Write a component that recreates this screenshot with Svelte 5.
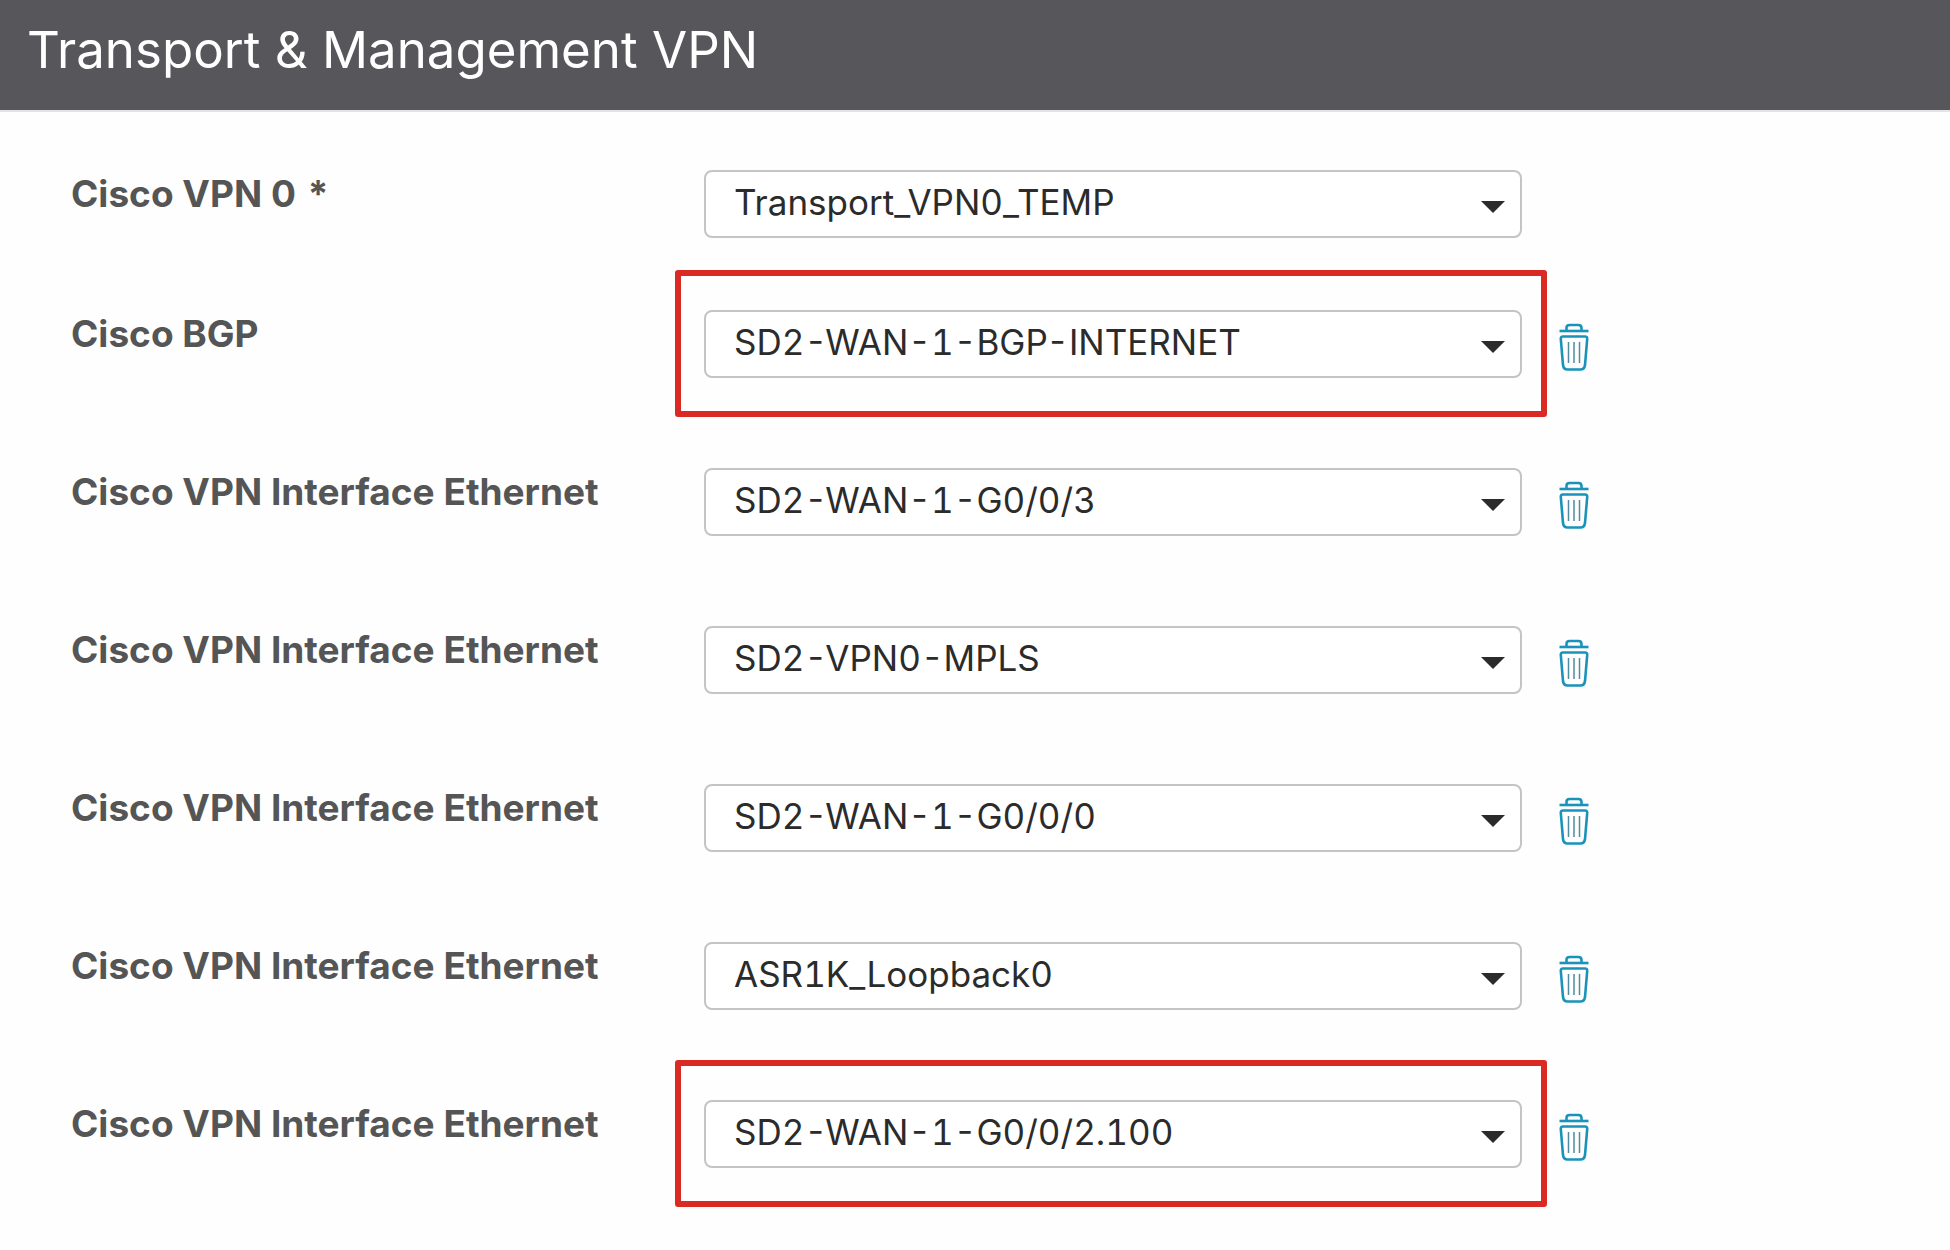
<script lang="ts">
	type Row = {
		id: string;
		label: string;
		value: string;
		required?: boolean;
		highlighted?: boolean;
	};

	let rows: Row[] = $state([
		{ id: 'vpn0', label: 'Cisco VPN 0', value: 'Transport_VPN0_TEMP', required: true },
		{ id: 'bgp', label: 'Cisco BGP', value: 'SD2-WAN-1-BGP-INTERNET', highlighted: true },
		{ id: 'eth1', label: 'Cisco VPN Interface Ethernet', value: 'SD2-WAN-1-G0/0/3' },
		{ id: 'eth2', label: 'Cisco VPN Interface Ethernet', value: 'SD2-VPN0-MPLS' },
		{ id: 'eth3', label: 'Cisco VPN Interface Ethernet', value: 'SD2-WAN-1-G0/0/0' },
		{ id: 'eth4', label: 'Cisco VPN Interface Ethernet', value: 'ASR1K_Loopback0' },
		{
			id: 'eth5',
			label: 'Cisco VPN Interface Ethernet',
			value: 'SD2-WAN-1-G0/0/2.100',
			highlighted: true
		}
	]);

	function removeRow(id: string) {
		rows = rows.filter((row) => row.id !== id);
	}
</script>

<header class="sectionHeader">
	<h1>Transport &amp; Management VPN</h1>
</header>

<form class="templates">
	{#each rows as row (row.id)}
		<div class="row" class:required={row.required}>
			<label for={row.id}>{row.label}{#if row.required}<span class="star">*</span>{/if}</label>
			<div class="field" class:highlighted={row.highlighted}>
				<select id={row.id}>
					<option>{row.value}</option>
				</select>
				<svg class="caret" viewBox="0 0 24 12" aria-hidden="true">
					<path d="M0 0h24L12 12z" fill="#2b2b2b" />
				</svg>
			</div>
			{#if !row.required}
				<button type="button" aria-label="Remove {row.label}" onclick={() => removeRow(row.id)}>
					<svg viewBox="0 0 30 48" fill="none" aria-hidden="true">
						<g stroke="#1a93ba" stroke-width="2.6">
							<path d="M0.5 8H29.5" />
							<path d="M7.5 8V5Q7.5 2 10.5 2H19.5Q22.5 2 22.5 5V8" />
							<path
								d="M4 13.5H26Q28.4 13.5 28.2 16L26 42Q25.4 46.5 21.5 46.5H8.5Q4.6 46.5 4 42L1.8 16Q1.6 13.5 4 13.5Z"
							/>
						</g>
						<path d="M9.5 19V40M15 19V40M20.5 19V40" stroke="#4f8ca0" stroke-width="1.5" />
					</svg>
				</button>
			{/if}
		</div>
	{/each}
</form>

<style>
	:global(body) {
		background: #fefefe;
		font-family: Inter, 'Liberation Sans', sans-serif;
	}

	.sectionHeader {
		padding: 20px 27px 30px;
		background: #57565b;
		border-bottom: 2px solid #e4e4e4;
	}

	h1 {
		margin: 0;
		font-size: 51px;
		font-weight: 400;
		line-height: 60px;
		color: #fff;
	}

	.templates {
		padding: 58px 396px 0 71px;
	}

	.row {
		display: grid;
		grid-template-columns: 633px minmax(0, 1fr) 32px;
		align-items: start;
		height: 158px;
	}

	.row.required {
		height: 140px;
	}

	label {
		font-size: 37px;
		font-weight: 700;
		line-height: 48px;
		color: #555;
	}

	.star {
		margin-left: 12px;
	}

	.field {
		position: relative;
	}

	select {
		display: block;
		width: 100%;
		height: 68px;
		padding: 0 60px 4px 28px;
		appearance: none;
		background: #fff;
		border: 2px solid #c4c4c4;
		border-radius: 8px;
		font-family: inherit;
		font-size: 35px;
		font-variant-numeric: tabular-nums;
		color: #2b2b2b;
	}

	.caret {
		position: absolute;
		top: 31px;
		right: 17px;
		width: 24px;
		height: 12px;
		pointer-events: none;
	}

	/* frame drawn around the picked-out fields */
	.highlighted::after {
		content: '';
		position: absolute;
		inset: -40px -25px -39px -29px;
		border: 6px solid #d92a24;
		border-radius: 3px;
		pointer-events: none;
	}

	button {
		display: block;
		width: 30px;
		height: 48px;
		margin: 13px 0 0 37px;
		padding: 0;
		background: none;
		border: 0;
		cursor: pointer;
	}

	button svg {
		display: block;
		width: 30px;
		height: 48px;
	}
</style>
